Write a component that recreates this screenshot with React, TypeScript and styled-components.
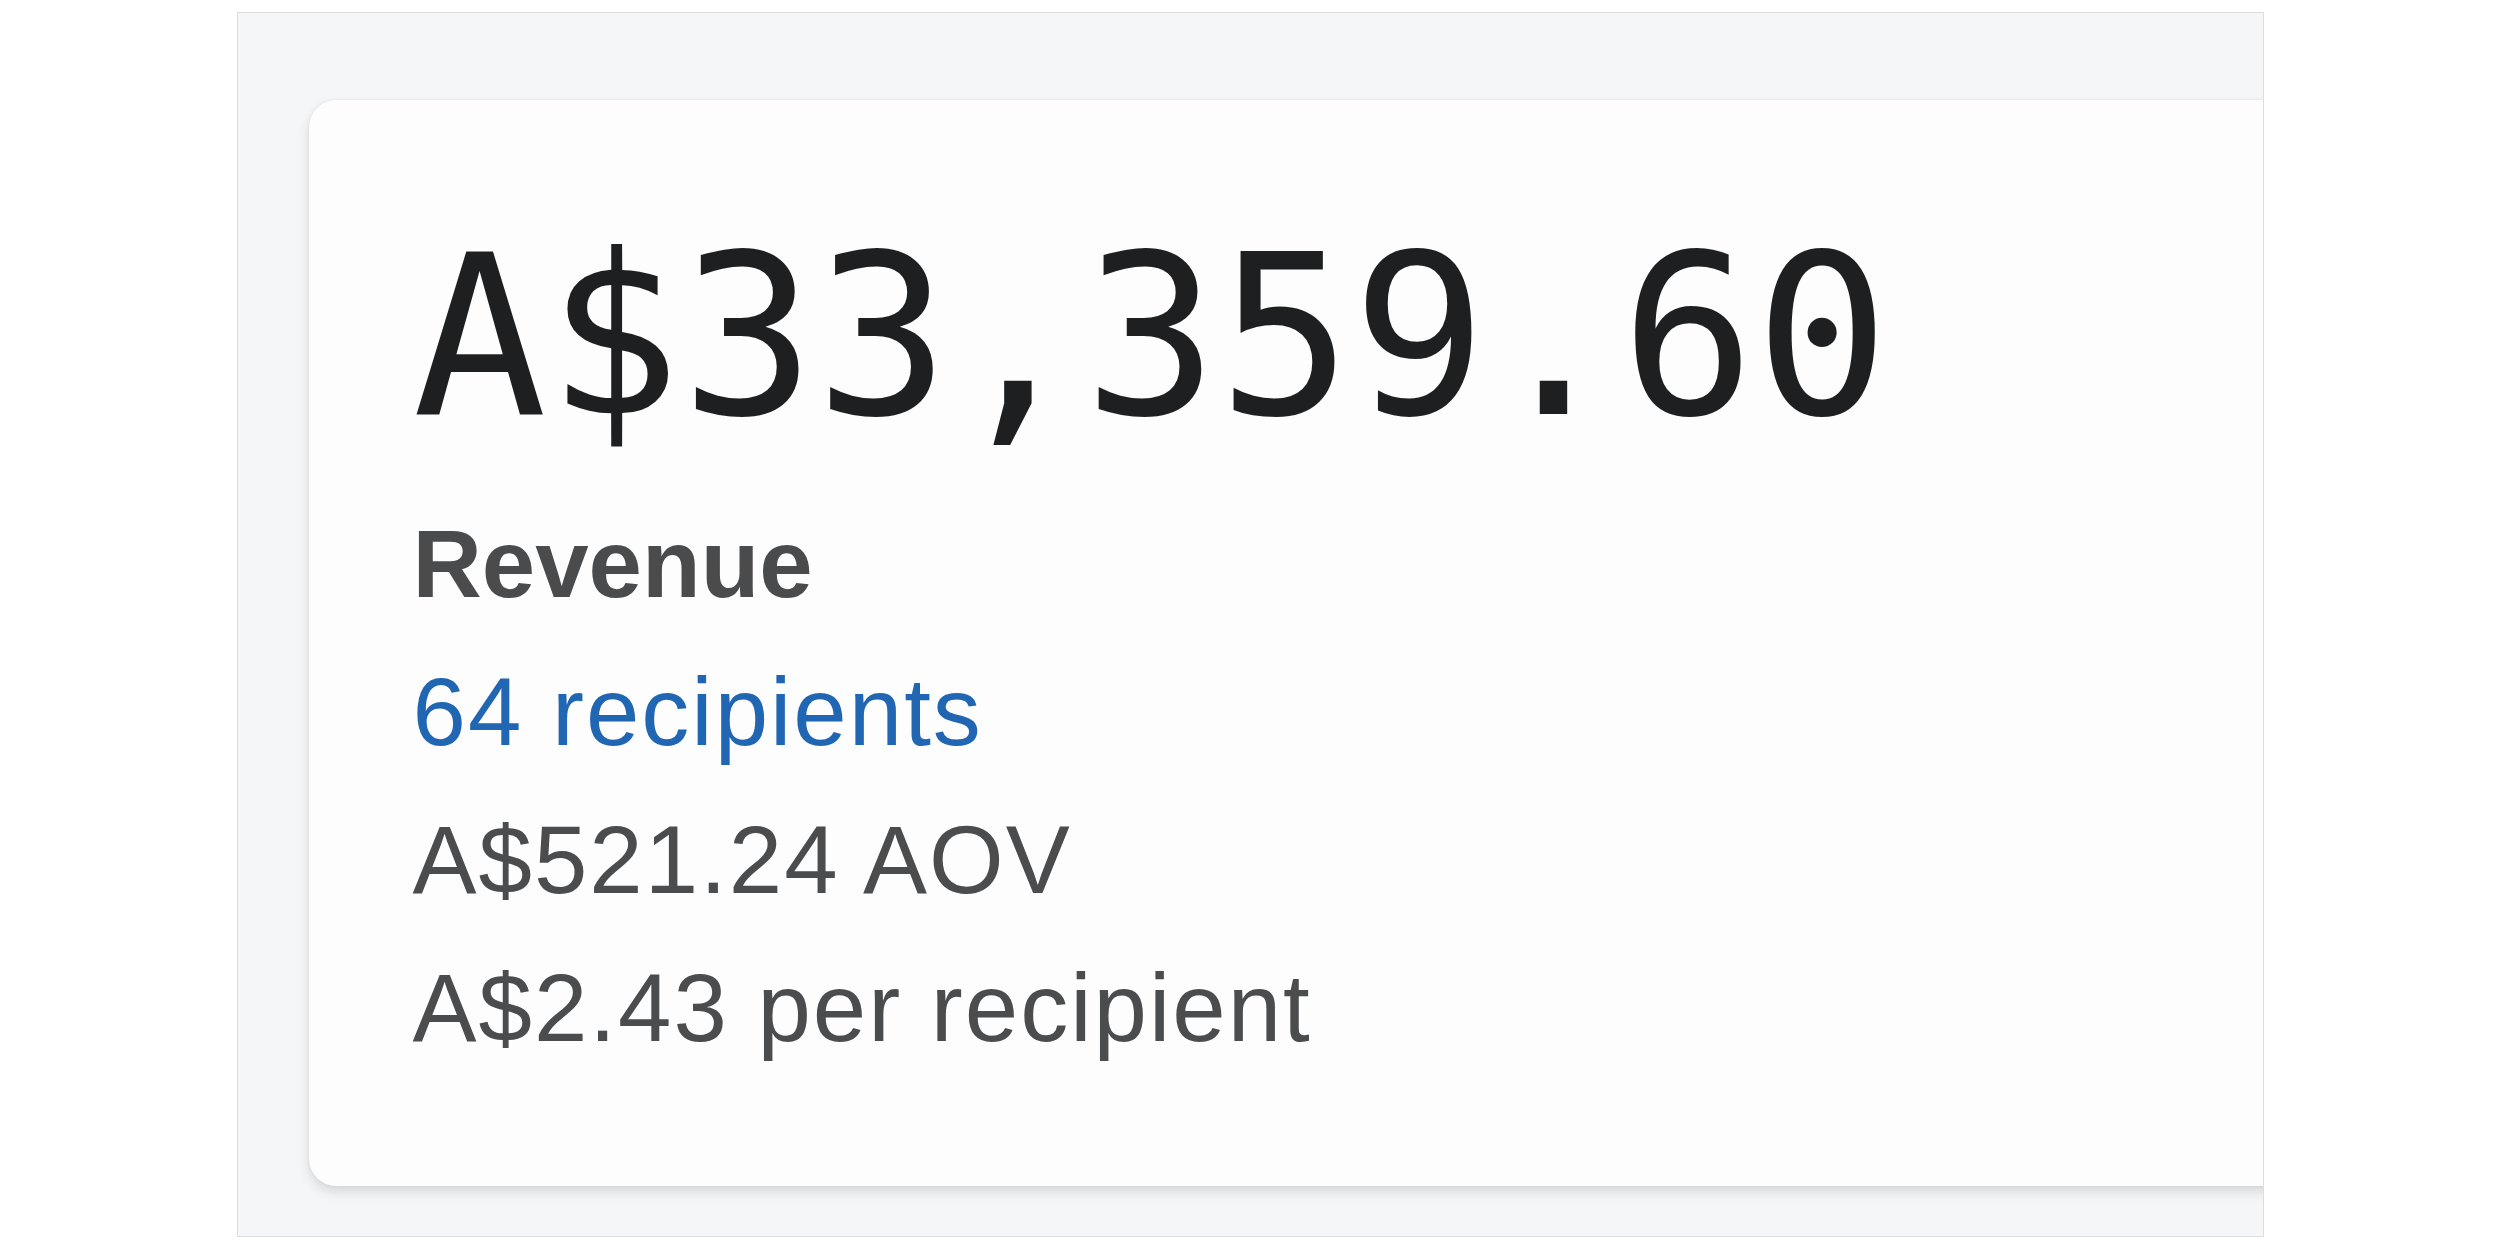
import React from 'react';
import styled, { createGlobalStyle } from 'styled-components';

interface Stat {
  text: string;
  tone?: 'label' | 'link' | 'muted';
}

const stats: Stat[] = [
  { text: 'Revenue', tone: 'label' },
  { text: '64 recipients', tone: 'link' },
  { text: 'A$521.24 AOV', tone: 'muted' },
  { text: 'A$2.43 per recipient', tone: 'muted' },
];

const GlobalStyle = createGlobalStyle`
  body {
    margin: 0;
    background: #ffffff;
    font-family: 'Liberation Sans', Arial, sans-serif;
  }
`;

const Panel = styled.section`
  box-sizing: border-box;
  width: 2027px;
  height: 1225px;
  margin: 12px auto 0;
  padding: 87px 0 0 71px;
  background: #f5f6f7;
  border: 1px solid #dcdddf;
  overflow: hidden;
`;

const Card = styled.div`
  box-sizing: border-box;
  width: 2100px;
  padding: 126px 102px 104px 104px;
  background: #fdfdfd;
  border-radius: 27px;
  box-shadow: 0 6px 12px rgba(30, 40, 55, 0.14), 0 0 3px rgba(30, 40, 55, 0.08);
`;

const Amount = styled.div`
  font-family: 'DejaVu Sans Mono', 'Liberation Mono', monospace;
  font-size: 223px;
  line-height: 222px;
  color: #1e1f20;
  margin-bottom: 42px;
  white-space: nowrap;
`;

const toneColor = {
  label: '#4a4b4d',
  link: '#2166b3',
  muted: '#4b4c4e',
};

const Line = styled.div<{ $tone: 'label' | 'link' | 'muted' }>`
  font-size: 96px;
  line-height: 148px;
  font-weight: ${(p) => (p.$tone === 'label' ? 700 : 400)};
  letter-spacing: ${(p) => (p.$tone === 'label' ? '0' : '2px')};
  color: ${(p) => toneColor[p.$tone]};
  white-space: nowrap;
`;

const App: React.FC = () => {
  return (
    <>
      <GlobalStyle />
      <Panel>
        <Card>
          <Amount>A$33,359.60</Amount>
          {stats.map((s) => (
            <Line key={s.text} $tone={s.tone || 'muted'}>
              {s.text}
            </Line>
          ))}
        </Card>
      </Panel>
    </>
  );
};

export default App;
